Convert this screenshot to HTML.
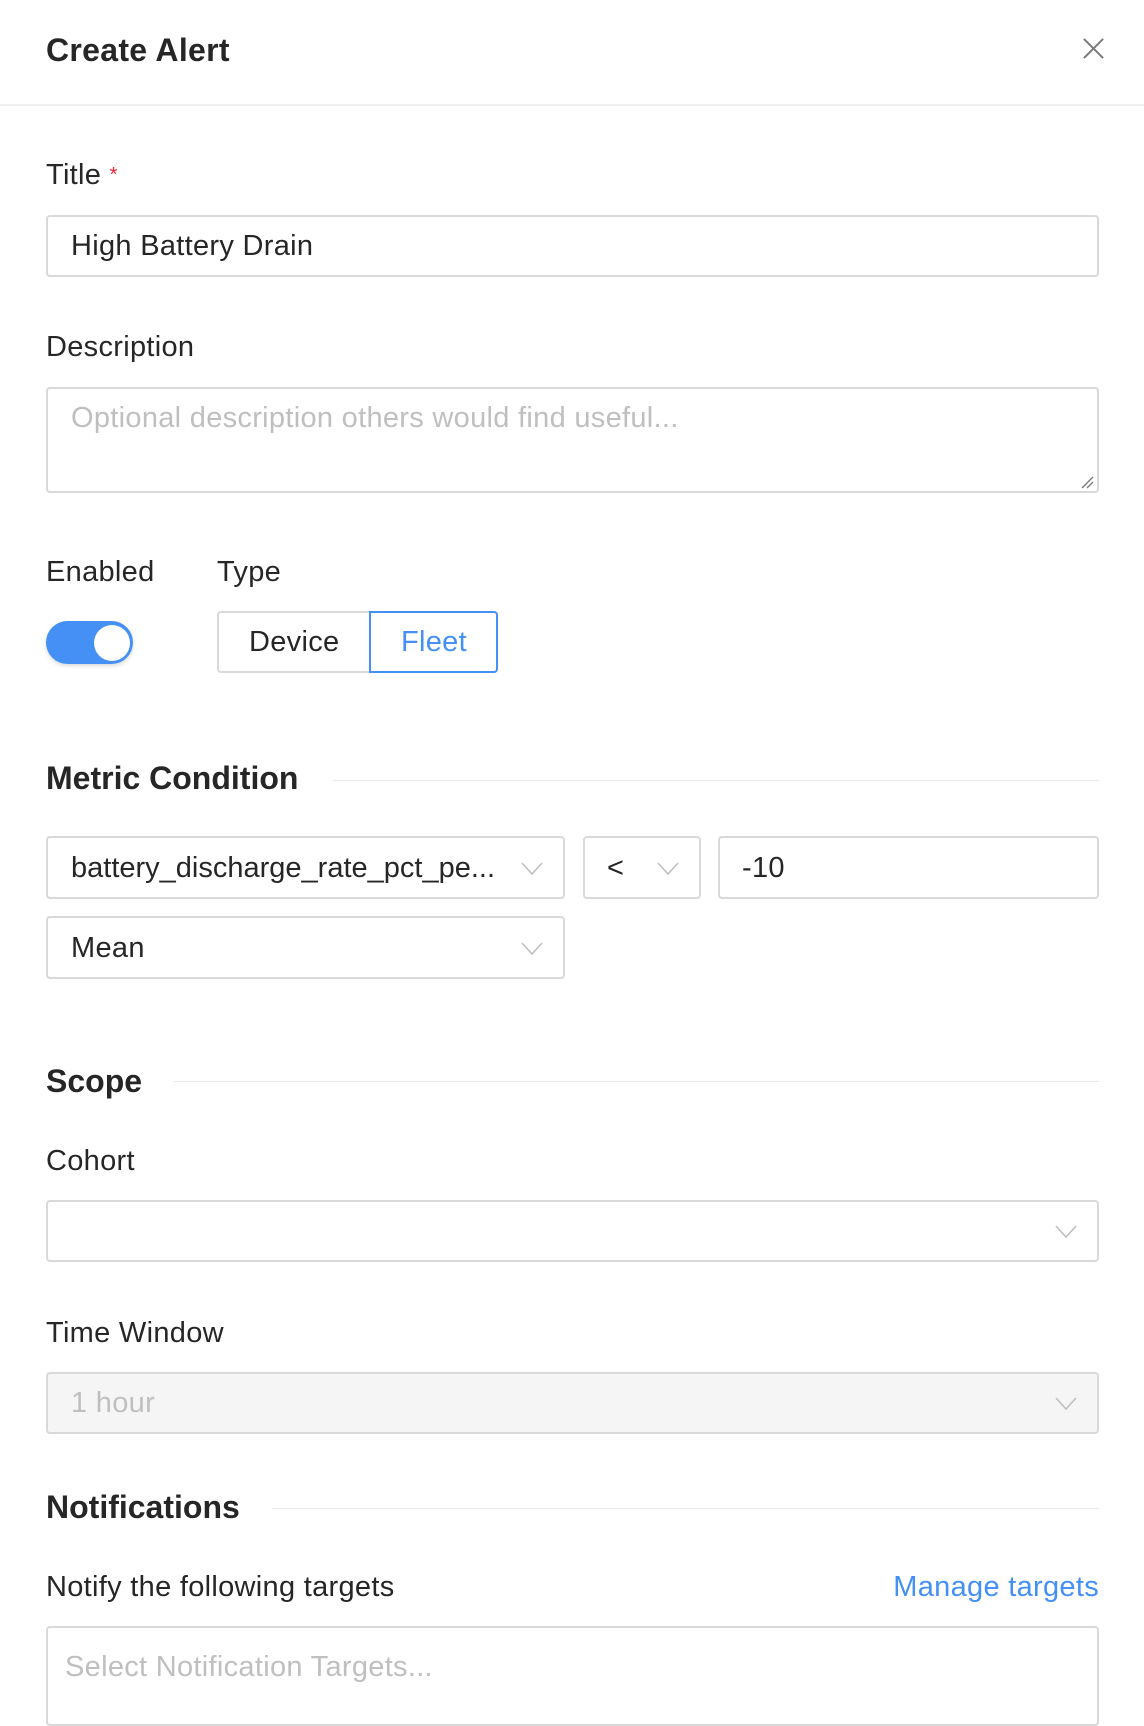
<!DOCTYPE html>
<html><head><meta charset="utf-8"><style>
*{box-sizing:border-box;margin:0;padding:0}
body{width:1144px;height:1686px;background:#fff;font-family:"Liberation Sans",sans-serif;color:#262626;position:relative;overflow:hidden}
.a{position:absolute}
.lbl{font-size:29px;letter-spacing:0.3px;color:#262626;line-height:30px}
.box{position:absolute;border:2px solid #d9d9d9;border-radius:4px;background:#fff}
.txt{position:absolute;font-size:29px;letter-spacing:0.3px;line-height:30px}
.h{font-size:32px;font-weight:bold;color:#262626;line-height:36px}
.line{position:absolute;height:1px;background:#e8e8e8}
.chev{position:absolute;width:22px;height:13px}
</style></head><body>
<div class="a" style="left:46px;top:32px;font-size:32px;font-weight:bold;color:#262626;line-height:36px;letter-spacing:0.3px">Create Alert</div>
<svg class="a" style="left:1082px;top:37px" width="23" height="23" viewBox="0 0 24 24"><path d="M2 2L22 22M22 2L2 22" stroke="#777" stroke-width="2" fill="none"/></svg>
<div class="line" style="left:0;top:104px;width:1144px;height:2px;background:#efefef"></div>

<div class="a lbl" style="left:46px;top:160px">Title <span style="color:#f5222d;font-size:20px;vertical-align:top">*</span></div>
<div class="box" style="left:46px;top:215px;width:1053px;height:62px"></div>
<div class="txt" style="left:71px;top:231px">High Battery Drain</div>

<div class="a lbl" style="left:46px;top:332px">Description</div>
<div class="box" style="left:46px;top:387px;width:1053px;height:106px"></div>
<div class="txt" style="left:71px;top:403px;color:#bfbfbf">Optional description others would find useful...</div>
<svg class="a" style="left:1080px;top:475px" width="14" height="14"><path d="M2 13L13 2M7 13L13 7" stroke="#777" stroke-width="1.3"/></svg>

<div class="a lbl" style="left:46px;top:557px">Enabled</div>
<div class="a lbl" style="left:217px;top:557px">Type</div>
<div class="a" style="left:46px;top:621px;width:87px;height:43px;border-radius:22px;background:#4490f4;box-shadow:0 2px 4px rgba(0,0,0,.15)"></div>
<div class="a" style="left:94px;top:625px;width:36px;height:36px;border-radius:50%;background:#fff"></div>
<div class="box" style="left:217px;top:611px;width:155px;height:62px;border-radius:4px 0 0 4px;border-right:none"></div>
<div class="txt" style="left:249px;top:627px">Device</div>
<div class="box" style="left:369px;top:611px;width:129px;height:62px;border-color:#4490f4;border-radius:0 4px 4px 0"></div>
<div class="txt" style="left:401px;top:627px;color:#4490f4">Fleet</div>

<div class="a h" style="left:46px;top:760px">Metric Condition</div>
<div class="line" style="left:333px;top:780px;width:766px"></div>

<div class="box" style="left:46px;top:836px;width:519px;height:63px"></div>
<div class="txt" style="left:71px;top:853px;letter-spacing:0">battery_discharge_rate_pct_pe...</div>
<svg class="chev" style="left:521px;top:862px"><path d="M1 1L11 12L21 1" stroke="#bfbfbf" stroke-width="1.6" fill="none"/></svg>
<div class="box" style="left:583px;top:836px;width:118px;height:63px"></div>
<div class="txt" style="left:607px;top:853px">&lt;</div>
<svg class="chev" style="left:657px;top:862px"><path d="M1 1L11 12L21 1" stroke="#bfbfbf" stroke-width="1.6" fill="none"/></svg>
<div class="box" style="left:718px;top:836px;width:381px;height:63px"></div>
<div class="txt" style="left:742px;top:853px">-10</div>

<div class="box" style="left:46px;top:916px;width:519px;height:63px"></div>
<div class="txt" style="left:71px;top:933px">Mean</div>
<svg class="chev" style="left:521px;top:942px"><path d="M1 1L11 12L21 1" stroke="#bfbfbf" stroke-width="1.6" fill="none"/></svg>

<div class="a h" style="left:46px;top:1063px">Scope</div>
<div class="line" style="left:174px;top:1081px;width:925px"></div>

<div class="a lbl" style="left:46px;top:1146px">Cohort</div>
<div class="box" style="left:46px;top:1200px;width:1053px;height:62px"></div>
<svg class="chev" style="left:1055px;top:1225px"><path d="M1 1L11 12L21 1" stroke="#bfbfbf" stroke-width="1.6" fill="none"/></svg>

<div class="a lbl" style="left:46px;top:1318px">Time Window</div>
<div class="box" style="left:46px;top:1372px;width:1053px;height:62px;background:#f5f5f5"></div>
<div class="txt" style="left:71px;top:1388px;color:#bfbfbf">1 hour</div>
<svg class="chev" style="left:1055px;top:1397px"><path d="M1 1L11 12L21 1" stroke="#bfbfbf" stroke-width="1.6" fill="none"/></svg>

<div class="a h" style="left:46px;top:1489px">Notifications</div>
<div class="line" style="left:272px;top:1508px;width:827px"></div>

<div class="a lbl" style="left:46px;top:1572px">Notify the following targets</div>
<div class="a lbl" style="right:45px;top:1572px;color:#4490f4">Manage targets</div>
<div class="box" style="left:46px;top:1626px;width:1053px;height:100px"></div>
<div class="txt" style="left:65px;top:1652px;color:#bfbfbf">Select Notification Targets...</div>
</body></html>
